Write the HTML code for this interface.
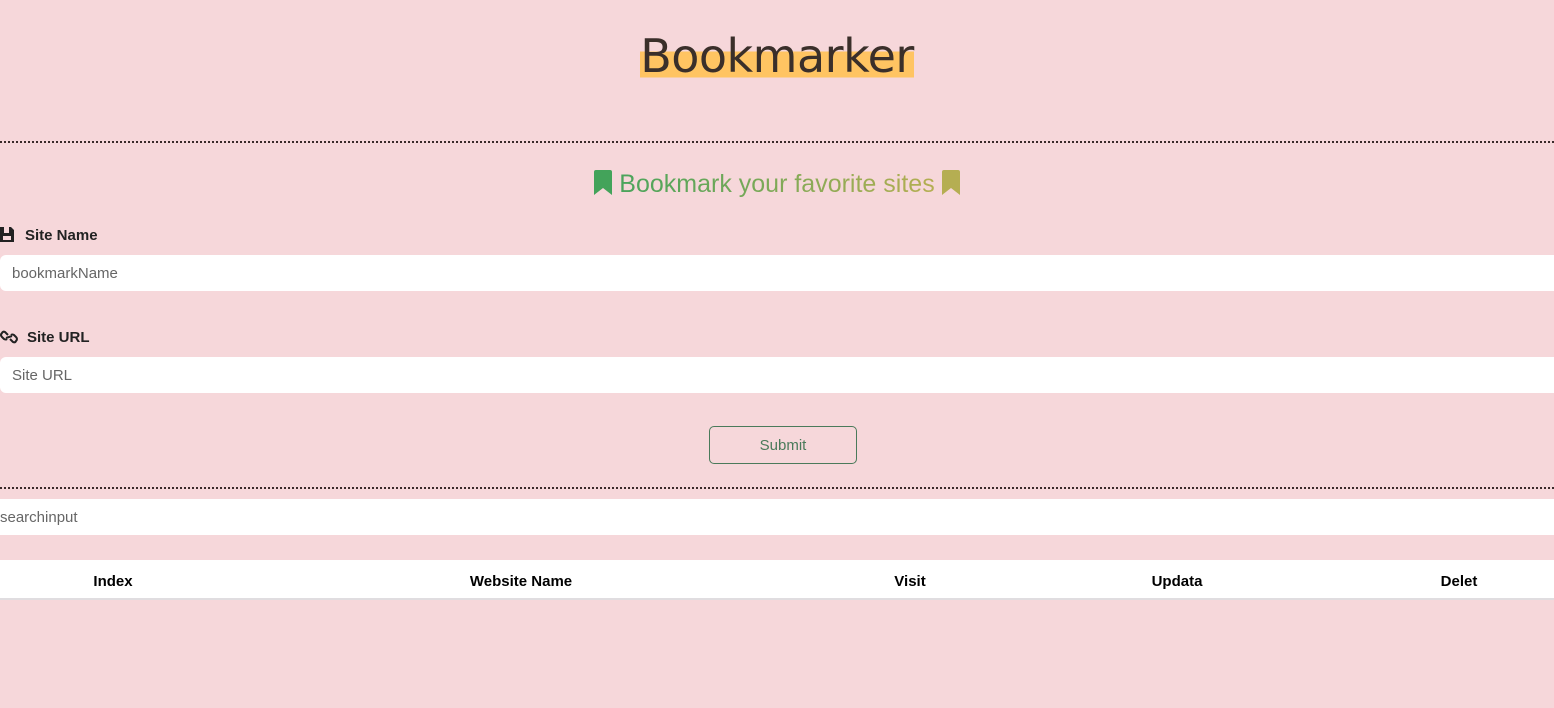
<!DOCTYPE html>
<html><head><meta charset="utf-8"><style>
*{box-sizing:border-box;margin:0;padding:0}
body{width:1554px;height:708px;overflow:hidden;background:#f6d7da;font-family:"Liberation Sans",sans-serif;position:relative}
h1{position:absolute;left:0;width:1554px;top:29px;text-align:center;font-family:"DejaVu Sans","Liberation Sans",sans-serif;font-weight:normal;font-size:46px;color:#3a2f2a;letter-spacing:-0.5px}
h1 span{background:linear-gradient(to bottom,transparent 0,transparent 42%,#ffc462 42%,#ffc462 90%,transparent 90%)}
.dots{position:absolute;left:0;width:1554px;border-top:2px dotted #3a2a2a}
.sub{position:absolute;top:170px;left:0;width:1554px;text-align:center;font-size:25px}
.sub .t{background:linear-gradient(90deg,#4aa45c,#b5ae52);-webkit-background-clip:text;color:transparent}
.lbl{position:absolute;left:0;font-weight:bold;font-size:15px;color:#222}
.inp{position:absolute;left:0;width:1560px;height:36px;background:#fff;border-radius:6px;font-size:15px;color:#666;padding:10px 12px}
.btn{position:absolute;left:709px;top:426px;width:148px;height:38px;border:1px solid #4a7a5a;border-radius:5px;text-align:center;line-height:38px;color:#4a7a5a;font-size:15px}
.th{position:absolute;top:560px;left:0;width:1554px;height:40px;background:#fff;border-bottom:2px solid #e0dde0}
.th div{position:absolute;top:13px;font-weight:bold;font-size:15px;color:#000;transform:translateX(-50%)}
</style></head><body>
<h1><span>Bookmarker</span></h1>
<div class="dots" style="top:141px"></div>
<div class="sub">
<svg width="18" height="25" viewBox="0 0 18 25" style="vertical-align:-3px"><path d="M0 2Q0 0 2 0H16Q18 0 18 2V25L9 18L0 25Z" fill="#43a35a"/></svg>
<span class="t">Bookmark your favorite sites</span>
<svg width="18" height="25" viewBox="0 0 18 25" style="vertical-align:-3px"><path d="M0 2Q0 0 2 0H16Q18 0 18 2V25L9 18L0 25Z" fill="#b5ae52"/></svg>
</div>
<div class="lbl" style="top:227px"><svg width="14" height="15" viewBox="0 0 14 15" style="vertical-align:-2px;margin-right:11px"><path d="M0 0H4V6H9V0H11L14 3V15H0Z" fill="#222"/><rect x="3" y="9" width="8" height="4" fill="#f6d7da"/></svg>Site Name</div>
<div class="inp" style="top:255px">bookmarkName</div>
<div class="lbl" style="top:329px"><svg width="18" height="14" viewBox="0 0 18 14" style="vertical-align:-2px;margin-right:9px"><g fill="none" stroke="#222" stroke-width="2"><path d="M8 5L5 2Q3 1 2 3Q0 5 2 7L4 9Q6 10 7 9"/><path d="M10 9L13 12Q15 13 16 11Q18 9 16 7L14 5Q12 4 11 5"/><path d="M6 8L12 6"/></g></svg>Site URL</div>
<div class="inp" style="top:357px">Site URL</div>
<div class="btn">Submit</div>
<div class="dots" style="top:487px"></div>
<div class="inp" style="top:499px;border-radius:0;padding-left:0">searchinput</div>
<div class="th">
<div style="left:113px">Index</div>
<div style="left:521px">Website Name</div>
<div style="left:910px">Visit</div>
<div style="left:1177px">Updata</div>
<div style="left:1459px">Delet</div>
</div>
</body></html>
